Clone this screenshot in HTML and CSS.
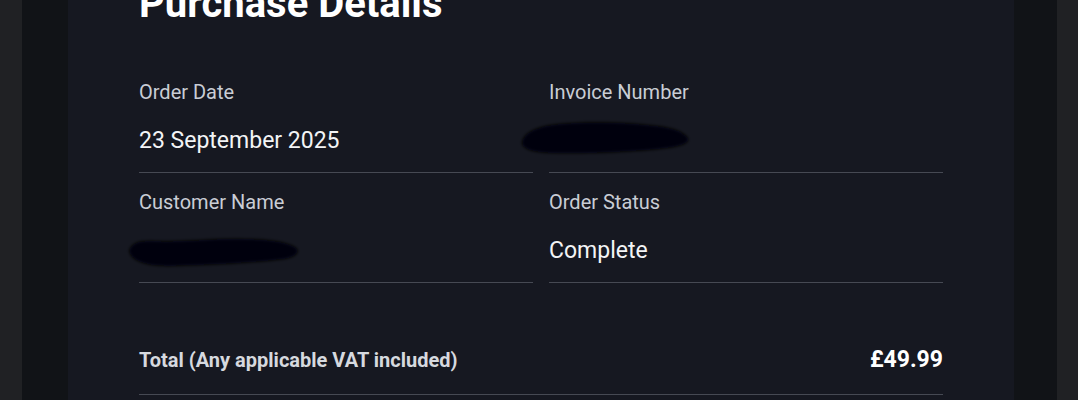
FILE: index.html
```html
<!DOCTYPE html>
<html lang="en">
<head>
<meta charset="utf-8">
<title>Purchase Details</title>
<link rel="stylesheet" href="styles.css">
</head>
<body>
<div class="frame">
  <div class="band">
    <main class="card">
      <h1 class="title">Purchase Details</h1>
      <div class="grid">
        <div class="cell">
          <div class="label">Order Date</div>
          <div class="value">23 September 2025</div>
        </div>
        <div class="cell">
          <div class="label">Invoice Number</div>
          <div class="value">
            <svg class="blob blob-invoice" width="176" height="40" viewBox="0 0 176 40">
              <defs><filter id="bl1" x="-10%" y="-30%" width="120%" height="160%"><feGaussianBlur stdDeviation="1.6"/></filter></defs>
              <path filter="url(#bl1)" fill="#050507" d="M4 24 C6 14 20 8 40 6 C70 3 110 4 140 8 C156 10 166 14 170 20 C172 25 164 28 150 30 C120 34 70 36 30 35 C12 34 3 30 4 24 Z"/>
            </svg>
          </div>
        </div>
        <div class="cell">
          <div class="label">Customer Name</div>
          <div class="value">
            <svg class="blob blob-customer" width="178" height="36" viewBox="0 0 178 36">
              <defs><filter id="bl2" x="-10%" y="-30%" width="120%" height="160%"><feGaussianBlur stdDeviation="1.6"/></filter></defs>
              <path filter="url(#bl2)" fill="#050507" d="M4 16 C6 8 14 5 30 6 C60 7 90 3 120 4 C140 4 160 6 170 12 C176 16 172 22 160 24 C130 28 90 30 50 31 C24 32 6 27 4 16 Z"/>
            </svg>
          </div>
        </div>
        <div class="cell">
          <div class="label">Order Status</div>
          <div class="value">Complete</div>
        </div>
      </div>
      <div class="total">
        <span class="total-label">Total (Any applicable VAT included)</span>
        <span class="total-price">£49.99</span>
      </div>
    </main>
  </div>
</div>
</body>
</html>
```

FILE: styles.css
```css
html, body {
  margin: 0;
  padding: 0;
  height: 100%;
  overflow: hidden;
}
body {
  background: #202124;
  font-family: Roboto, "Liberation Sans", Arial, sans-serif;
}
.frame {
  padding: 0 21px 0 22px;
  height: 100%;
}
.band {
  background: #111317;
  padding: 0 43px 0 46px;
  height: 100%;
}
.card {
  display: flow-root;
  background: #161821;
  height: 100%;
  padding: 0 71px;
  box-sizing: border-box;
}
.title {
  margin: -20px 0 0;
  font-size: 40px;
  line-height: 48px;
  font-weight: 700;
  color: #ffffff;
}
.grid {
  margin-top: 35px;
  display: grid;
  grid-template-columns: 1fr 1fr;
  column-gap: 16px;
}
.cell {
  padding: 15px 0 15px;
  border-bottom: 1px solid #464953;
}
.label {
  font-size: 20px;
  line-height: 28px;
  color: #c9cdd5;
}
.value {
  margin-top: 19px;
  font-size: 23px;
  line-height: 32px;
  height: 32px;
  color: #f3f4f6;
}
.blob {
  display: block;
}
.blob-invoice {
  margin: -7px 0 0 -31px;
}
.blob-customer {
  margin: 0 0 0 -14px;
}
.total {
  display: flex;
  justify-content: space-between;
  align-items: baseline;
  padding: 63px 0 20px;
  border-bottom: 1px solid #464953;
}
.total-label {
  font-size: 20px;
  line-height: 28px;
  font-weight: 700;
  color: #d6d9df;
}
.total-price {
  font-size: 23px;
  line-height: 28px;
  font-weight: 700;
  color: #ffffff;
}
```
